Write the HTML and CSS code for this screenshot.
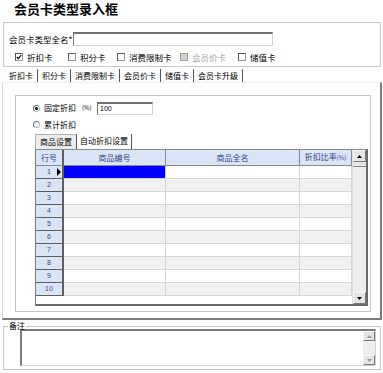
FILE: index.html
```html
<!DOCTYPE html>
<html lang="zh-CN">
<head>
    <meta charset="UTF-8">
    <title>会员卡类型录入框</title>
    <link rel="stylesheet" href="styles.css">
</head>
<body>
<div class="window">
    <h1 class="title">会员卡类型录入框</h1>

    <div class="head-group">
        <div class="name-row">
            <span class="name-label">会员卡类型全名*</span>
            <div class="textbox name-input"></div>
        </div>
        <div class="check-row">
            <span class="check on"><i class="box"><svg width="6" height="6" viewBox="0 0 6 6"><path d="M0.8 3 L2.4 4.7 L5.3 1" fill="none" stroke="#000" stroke-width="1.2"/></svg></i>折扣卡</span>
            <span class="check"><i class="box"></i>积分卡</span>
            <span class="check"><i class="box"></i>消费限制卡</span>
            <span class="check off"><i class="box"></i>会员价卡</span>
            <span class="check"><i class="box"></i>储值卡</span>
        </div>
    </div>

    <div class="tabs">
        <span class="tab active">折扣卡</span>
        <span class="tab">积分卡</span>
        <span class="tab">消费限制卡</span>
        <span class="tab">会员价卡</span>
        <span class="tab">储值卡</span>
        <span class="tab">会员卡升级</span>
    </div>

    <div class="tab-page">
        <div class="panel">
            <div class="radio-row">
                <span class="radio on"><i class="dot"></i>固定折扣<small>(%)</small></span>
                <div class="textbox rate-input">100</div>
            </div>
            <div class="radio-row second">
                <span class="radio"><i class="dot"></i>累计折扣</span>
            </div>

            <div class="subtabs">
                <span class="subtab active">商品设置</span>
                <span class="subtab">自动折扣设置</span>
            </div>

            <div class="grid">
                <div class="grid-body">
                    <table class="rows">
                        <thead>
                            <tr>
                                <th class="c-no">行号</th>
                                <th class="c-code">商品编号</th>
                                <th class="c-name">商品全名</th>
                                <th class="c-rate">折扣比率<small>(%)</small></th>
                            </tr>
                        </thead>
                        <tbody>
                            <tr><td class="no current">1</td><td class="sel"></td><td></td><td></td></tr>
                            <tr><td class="no">2</td><td></td><td></td><td></td></tr>
                            <tr><td class="no">3</td><td></td><td></td><td></td></tr>
                            <tr><td class="no">4</td><td></td><td></td><td></td></tr>
                            <tr><td class="no">5</td><td></td><td></td><td></td></tr>
                            <tr><td class="no">6</td><td></td><td></td><td></td></tr>
                            <tr><td class="no">7</td><td></td><td></td><td></td></tr>
                            <tr><td class="no">8</td><td></td><td></td><td></td></tr>
                            <tr><td class="no">9</td><td></td><td></td><td></td></tr>
                            <tr><td class="no">10</td><td></td><td></td><td></td></tr>
                        </tbody>
                    </table>
                </div>
                <div class="vscroll">
                    <div class="sbtn"><svg width="5" height="3" viewBox="0 0 5 3"><polygon points="2.5,0 5,3 0,3" fill="#000"/></svg></div>
                    <div class="thumb"></div>
                    <div class="track"></div>
                    <div class="sbtn"><svg width="5" height="3" viewBox="0 0 5 3"><polygon points="0,0 5,0 2.5,3" fill="#000"/></svg></div>
                </div>
            </div>
        </div>
    </div>

    <fieldset class="remark">
        <legend>备注</legend>
        <div class="memo">
            <div class="memo-text"></div>
            <div class="vscroll small">
                <div class="sbtn"><svg width="5" height="3" viewBox="0 0 5 3"><polygon points="2.5,0 5,3 0,3" fill="#999"/></svg></div>
                <div class="track"></div>
                <div class="sbtn"><svg width="5" height="3" viewBox="0 0 5 3"><polygon points="0,0 5,0 2.5,3" fill="#999"/></svg></div>
            </div>
        </div>
    </fieldset>
</div>
</body>
</html>
```

FILE: styles.css
```css
* {
    box-sizing: border-box;
}

body {
    margin: 0;
    background: #fff;
    color: #000;
    font-family: "Noto Sans CJK SC", "Noto Sans", sans-serif;
    font-size: 8px;
}

small {
    font-size: 6px;
}

.window {
    width: 383px;
}

.title {
    margin: 0;
    height: 22px;
    padding-left: 14px;
    font-size: 13px;
    line-height: 17px;
    font-weight: bold;
}

/* top group */
.head-group {
    margin: 0 2px 0 3px;
    height: 45px;
    border: 1px solid #c8c8c8;
    padding: 9px 0 0 5px;
}

.name-row {
    display: flex;
    align-items: center;
    height: 14px;
}

.name-label {
    width: 64px;
    font-size: 8.5px;
    line-height: 14px;
}

.textbox {
    height: 14px;
    background: #fff;
    border-top: 2px solid #6f6f6f;
    border-left: 1px solid #7a7a7a;
    border-right: 1px solid #d2d2d2;
    border-bottom: 1px solid #d2d2d2;
    font-family: "Liberation Sans", sans-serif;
    font-size: 7px;
    line-height: 10px;
    padding-left: 2px;
}

.name-input {
    width: 200px;
}

.check-row {
    display: grid;
    grid-template-columns: 53px 49px 63px 58px auto;
    height: 10px;
    margin-top: 6px;
    padding-left: 6px;
    align-items: center;
}

.check {
    display: flex;
    align-items: center;
    gap: 4px;
    font-size: 8.5px;
    line-height: 10px;
}

.box {
    display: flex;
    align-items: center;
    justify-content: center;
    width: 8px;
    height: 8px;
    border: 1px solid #555;
    border-right-color: #999;
    border-bottom-color: #999;
    background: #fff;
}

.check.off {
    color: #a8a8a8;
}

.check.off .box {
    background: #d6d3cc;
    border-color: #a0a0a0;
}

/* outer tabs */
.tabs {
    display: flex;
    height: 15px;
    padding: 2px 0 0 5px;
}

.tab {
    padding: 0 4px;
    line-height: 13px;
    border-right: 1px solid #555;
}

.tab-page {
    margin: 0 1px 0 2px;
    height: 238px;
    border-left: 1px solid #d8d8d8;
    border-top: 1px solid #f0f0f0;
    border-right: 2px solid #7d7d7d;
    border-bottom: 2px solid #7d7d7d;
    padding: 12px 9px 0 12px;
}

.panel {
    height: 217px;
    border: 1px solid #c6c6c6;
    padding-top: 5px;
}

.radio-row {
    display: flex;
    align-items: center;
    height: 14px;
    margin-left: 17px;
}

.radio-row.second {
    height: 13px;
    margin-top: 3px;
}

.radio {
    display: flex;
    align-items: center;
    gap: 4px;
    width: 64px;
    line-height: 12px;
}

.radio small {
    margin-left: 2px;
}

.dot {
    display: flex;
    align-items: center;
    justify-content: center;
    width: 7px;
    height: 7px;
    border-radius: 50%;
    border: 1px solid #6a6a6a;
    border-right-color: #b8b8b8;
    border-bottom-color: #b8b8b8;
}

.radio.on .dot::after {
    content: "";
    width: 3px;
    height: 3px;
    border-radius: 50%;
    background: #000;
}

.rate-input {
    width: 56px;
    height: 13px;
}

/* inner tabs */
.subtabs {
    display: flex;
    height: 15px;
    margin: 3px 0 0 19px;
}

.subtab {
    padding: 0 3px;
    line-height: 14px;
    border-right: 1px solid #555;
}

.subtab.active {
    padding: 0 4px;
    background: #ececec;
    border: 1px solid #b0b0b0;
    border-right-color: #555;
    border-bottom: none;
    line-height: 13px;
}

/* data grid */
.grid {
    display: flex;
    width: 333px;
    height: 157px;
    margin-left: 19px;
    border-left: 1px solid #7a7a7a;
    border-top: 1px solid #8a8a8a;
    border-right: 2px solid #6a6a6a;
    border-bottom: 2px solid #6a6a6a;
}

.grid-body {
    width: 316px;
    background: #fff;
}

.rows {
    width: 316px;
    table-layout: fixed;
    border-collapse: separate;
    border-spacing: 0;
}

.rows th,
.rows td {
    padding: 0;
    text-align: center;
    font-weight: normal;
}

.rows thead tr {
    height: 15px;
}

.rows tbody tr {
    height: 13px;
}

.rows th {
    line-height: 14px;
    background: #d9e5f6;
    color: #33468c;
    border-right: 1px solid #8a8a8a;
    border-bottom: 1px solid #8a8a8a;
}

.rows .c-no {
    width: 28px;
    border-right: 2px solid #5f5f5f;
}

.rows .c-code {
    width: 102px;
}

.rows .c-name {
    width: 134px;
}

.rows .c-rate {
    width: 52px;
}

.rows td {
    line-height: 12px;
    border-right: 1px solid #d6d6d6;
    border-bottom: 1px solid #d6d6d6;
}

.rows tbody tr:nth-child(even) td {
    background: #f1f1f1;
}

.rows td.no,
.rows tbody tr:nth-child(even) td.no {
    position: relative;
    background: #d9e5f6;
    color: #33468c;
    font-family: "Liberation Sans", sans-serif;
    font-size: 7px;
    border-right: 2px solid #5f5f5f;
    border-bottom: 1px solid #5f5f5f;
}

.rows td.current::after {
    content: "";
    position: absolute;
    right: 1px;
    top: 2px;
    border-left: 4px solid #000;
    border-top: 4px solid transparent;
    border-bottom: 4px solid transparent;
}

.rows td.sel {
    background: #0000ff;
}

.vscroll {
    display: flex;
    flex-direction: column;
    width: 14px;
    background: #eeeeee;
    border-left: 1px solid #dcdcdc;
}

.sbtn {
    display: flex;
    align-items: center;
    justify-content: center;
    height: 12px;
    background: #e4e4e4;
    border: 1px solid #f6f6f6;
    border-right-color: #7a7a7a;
    border-bottom-color: #7a7a7a;
}

.thumb {
    height: 5px;
    background: #e4e4e4;
    border-bottom: 1px solid #8a8a8a;
}

.track {
    flex: 1;
}

/* remark */
.remark {
    margin: 2px 2px 0 3px;
    height: 48px;
    padding: 0 4px 0 4px;
    border: 1px solid #c8c8c8;
}

.remark legend {
    padding: 0 1px;
    font-size: 8px;
    line-height: 8px;
}

.memo {
    display: flex;
    height: 37px;
    margin: -1px 0 0 12px;
    border-top: 2px solid #7c7c7c;
    border-left: 2px solid #7c7c7c;
    border-right: 1px solid #d0d0d0;
    border-bottom: 1px solid #d0d0d0;
}

.memo-text {
    flex: 1;
}

.vscroll.small {
    width: 12px;
    border-left: none;
}

.vscroll.small .sbtn {
    height: 10px;
}
```
